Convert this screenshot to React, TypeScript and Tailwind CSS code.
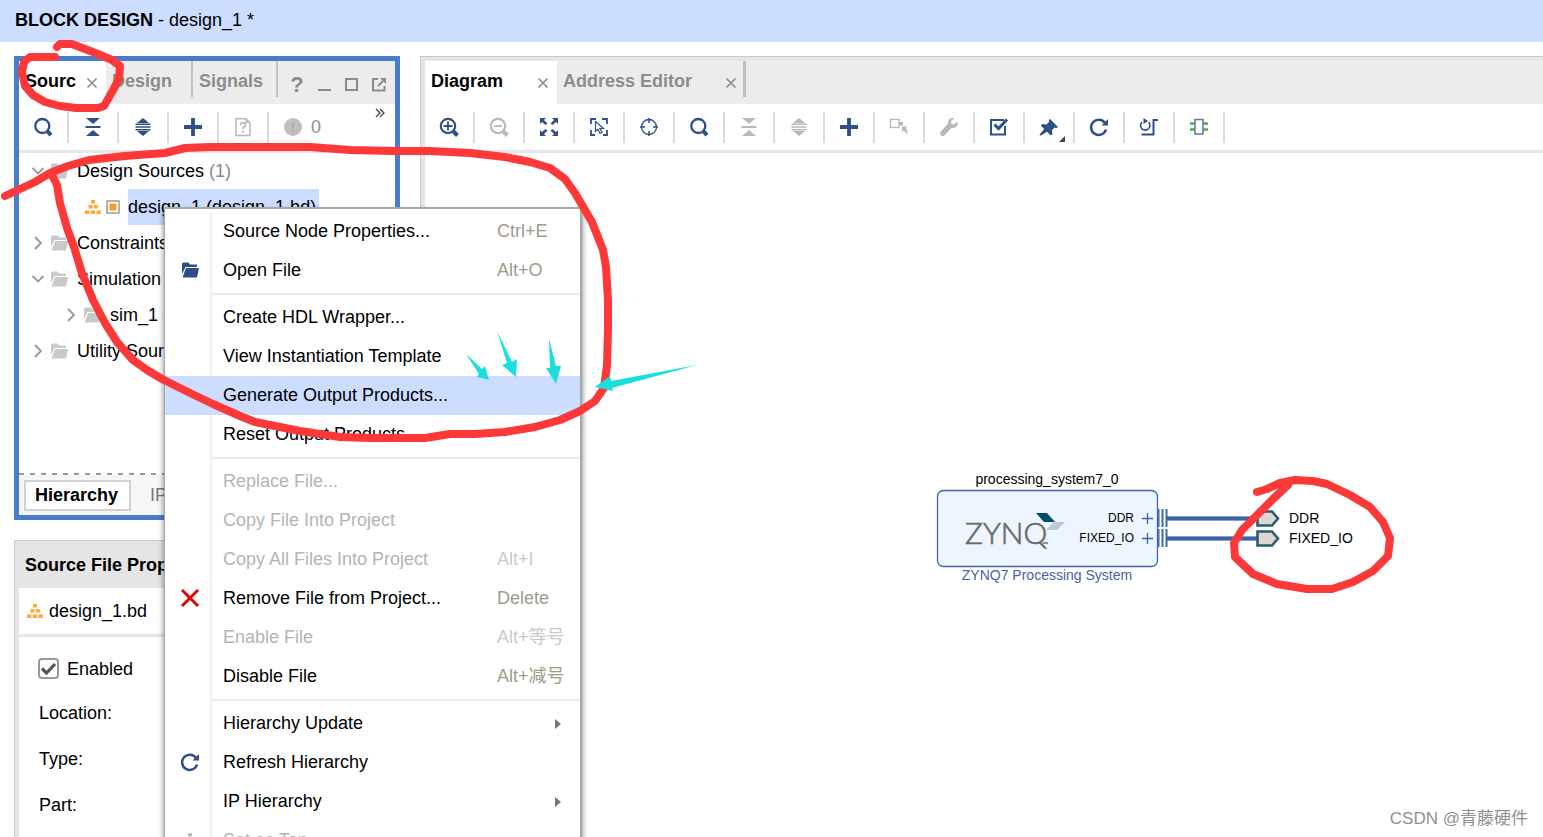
import { useState, type ReactNode } from "react";

const NAVY = "#2f4f87";
const MUTED = "#b9b9b9";

type IconProps = { color?: string };

const Svg = ({ children }: { children: ReactNode }) => (
  <svg width="20" height="20" viewBox="0 0 20 20" fill="none" aria-hidden="true">
    {children}
  </svg>
);

const SearchIcon = ({ color = NAVY }: IconProps) => (
  <Svg>
    <circle cx="9.3" cy="9" r="7" stroke={color} strokeWidth="2.3" />
    <path d="M14.5 14.5l3.5 3.5" stroke={color} strokeWidth="4" />
  </Svg>
);

const ZoomInIcon = () => (
  <Svg>
    <circle cx="9" cy="9" r="7.2" stroke={NAVY} strokeWidth="2.2" />
    <path d="M14.5 14.5l4 4" stroke={NAVY} strokeWidth="4" />
    <path d="M9 4.5v9M4.5 9h9" stroke={NAVY} strokeWidth="1.8" />
  </Svg>
);

const ZoomOutIcon = () => (
  <Svg>
    <circle cx="9" cy="9" r="7.2" stroke={MUTED} strokeWidth="2.2" />
    <path d="M14.5 14.5l4 4" stroke={MUTED} strokeWidth="4" />
    <path d="M5 9h8" stroke={MUTED} strokeWidth="1.8" />
  </Svg>
);

const CollapseIcon = ({ color = NAVY }: IconProps) => (
  <Svg>
    <path d="M3 1h14l-7 6zM2.5 9h15v2h-15zM3 19h14l-7-6z" fill={color} />
  </Svg>
);

const ExpandIcon = ({ color = NAVY }: IconProps) => (
  <Svg>
    <path d="M10 1l6 5H4zM2.5 6.5h15V8h-15zM2.5 9.2h15v1.6h-15zM2.5 12h15v1.5h-15zM4 14h12l-6 5z" fill={color} />
  </Svg>
);

const PlusIcon = () => (
  <Svg>
    <path d="M10 1v18M1 10h18" stroke={NAVY} strokeWidth="3.8" />
  </Svg>
);

const HelpDocIcon = () => (
  <Svg>
    <path d="M3 1.8h10l4 4v12.700H3z" stroke={MUTED} strokeWidth="1.5" />
    <path d="M12.500 1.500v4.500H17z" fill={MUTED} />
    <path d="M7.500 8c0-3 5-3 5 0 0 2-2.500 2-2.500 4M10 13.500v2" stroke={MUTED} strokeWidth="1.8" />
  </Svg>
);

const WarnIcon = () => (
  <Svg>
    <circle cx="10" cy="10" r="9" fill="#bfbfbf" />
    <path d="M10 5v6.5M10 13v2" stroke="#adadad" strokeWidth="2" />
  </Svg>
);

const FitIcon = () => (
  <Svg>
    <path
      d="M1 1h6l-2 2 3.500 3.500L6.500 8 3 5 1 7zM19 1h-6l2 2-3.500 3.500L13.500 8 17 5l2 2zM1 19h6l-2-2 3.500-3.500L6.500 12 3 15l-2-2zM19 19h-6l2-2-3.500-3.500 2-1.500 3.500 3 2-2z"
      fill={NAVY}
    />
  </Svg>
);

const SelectAreaIcon = () => (
  <Svg>
    <path d="M2 7V2h5M13 2h5v5M18 13v5h-4M6 18H2v-5" stroke={NAVY} strokeWidth="1.8" />
    <path d="M6.500 4.500v10l2.500-2.200 2 4.200 2-1-2-4h3.500z" stroke={NAVY} strokeWidth="1.2" fill="#fff" />
  </Svg>
);

const TargetIcon = () => (
  <Svg>
    <circle cx="10" cy="10" r="7.5" stroke={NAVY} strokeWidth="1.3" />
    <path d="M10 1v5M10 14v5M1 10h5M14 10h5" stroke={NAVY} strokeWidth="1.5" />
  </Svg>
);

const MakeExternalIcon = () => (
  <Svg>
    <rect x="1.5" y="2.5" width="8.500" height="8" stroke={MUTED} strokeWidth="1.3" />
    <path d="M10 5h4v3.500h-4zM13 9.500h5.500L17 11l2 5.500h-1.500L15 13.500 13 15z" fill={MUTED} />
  </Svg>
);

const WrenchIcon = () => (
  <Svg>
    <path
      d="M18.600 4.600l-3.300 3-2.700-.6-.6-2.700 3.200-3C12.500.2 8.800 2 9 6.500L1.500 15c-1.500 2.500 1.300 5.300 3.800 3.500L12.500 11c4.500.5 7.200-3 6.100-6.400z"
      fill={MUTED}
    />
  </Svg>
);

const ValidateIcon = () => (
  <Svg>
    <path d="M15 3H2v14.500h14V9" stroke={NAVY} strokeWidth="2" />
    <path d="M5.500 7.500l4 4L18 2.500" stroke={NAVY} strokeWidth="3" />
  </Svg>
);

const PinIcon = () => (
  <Svg>
    <path
      d="M11 2l8 8-1.500 1.200-2-.6-2.500 2.700.4 4-1.600 1.200-3.800-3.700L2 18.500H.8v-1.200L5.200 12 1.800 8.500 3.300 7l4.200.4 2.700-2.600L9.700 3z"
      fill={NAVY}
    />
  </Svg>
);

const RefreshIcon = () => (
  <Svg>
    <path d="M16 6A7.600 7.600 0 1 0 17 12.500" stroke={NAVY} strokeWidth="2.500" />
    <path d="M19 2v6.500h-6.500z" fill={NAVY} />
  </Svg>
);

const RegenerateIcon = () => (
  <Svg>
    <path d="M3 5a4.700 4.700 0 1 0 6.500 0" stroke={NAVY} strokeWidth="1.600" />
    <path d="M4.500 1v6l4.500-3z" fill={NAVY} />
    <path d="M19 3h-4.500v14.500H2.500" stroke={NAVY} strokeWidth="2" />
  </Svg>
);

const ChipIcon = () => (
  <Svg>
    <path d="M1 6.500h18M1 12.500h18" stroke="#4cae50" strokeWidth="2.500" />
    <rect x="6" y="2.500" width="8" height="14.500" stroke="#6076a6" strokeWidth="1.500" fill="#fff" />
  </Svg>
);

const FolderIcon = ({ color = "#c9c9c9" }: IconProps) => (
  <Svg>
    <path d="M2 4C2 3 3 2.500 4 2.500h4.500l1.500 2h7V7H5.500L2 14z" fill={color} />
    <path d="M6 8h13l-2 9.500H2.500z" fill={color} />
  </Svg>
);

const RemoveIcon = () => (
  <Svg>
    <path d="M2 2l16 16M18 2L2 18" stroke="#e60000" strokeWidth="3" />
  </Svg>
);

const HierarchyIcon = ({ color = "#fca83a" }: IconProps) => (
  <svg width="18" height="16" viewBox="0 0 18 16" fill={color} aria-hidden="true">
    <path d="M7 1h4v3.500H7zM4.500 6h4v3.500h-4zM9.800 6h4v3.500h-4zM1 11.500h4.500V15H1zM6.700 11.500h4.500V15H6.700zM12.400 11.500h4.500V15h-4.500z" />
  </svg>
);

const Chevron = ({ open }: { open?: boolean }) => (
  <svg width="12" height="14" viewBox="0 0 12 14" fill="none" stroke="#989898" strokeWidth="1.800" aria-hidden="true">
    <path d={open ? "M.5 4L6 9.500 11.500 4" : "M3 1l6 6-6 6"} />
  </svg>
);

const CloseIcon = () => (
  <svg width="12" height="12" viewBox="0 0 12 12" stroke="#8e8e8e" strokeWidth="1.700" aria-hidden="true">
    <path d="M1.500 1.500l9 9M10.500 1.500l-9 9" />
  </svg>
);

function ToolButton({ label, disabled, children }: { label: string; disabled?: boolean; children: ReactNode }) {
  return (
    <>
      <button aria-label={label} disabled={disabled} className="relative flex h-full w-12 shrink-0 items-center justify-center">
        {children}
      </button>
      <span className="h-[31px] w-0.5 shrink-0 bg-[#dbdbdb]" />
    </>
  );
}

function TreeRow({ indent, open, label, count }: { indent: string; open?: boolean; label: string; count?: string }) {
  return (
    <li className={`flex h-9 items-center whitespace-nowrap ${indent}`}>
      <Chevron open={open} />
      <span className="ml-[5px] mr-2">
        <FolderIcon />
      </span>
      {label}
      {count && <span className="ml-[5px] text-[#8a8a8a]">{count}</span>}
    </li>
  );
}

function SourcesPanel() {
  return (
    <section className="flex h-[464px] flex-col border-[5px] border-[#4a7ccc] bg-white">
      <div className="flex h-[43px] shrink-0 bg-[#ececec] font-bold text-[#8c8c8c]">
        <button className="flex w-[87px] items-center bg-white pb-1 pl-1.5 text-black">
          Sourc
          <span className="ml-2.5 mt-1">
            <CloseIcon />
          </span>
        </button>
        <button className="h-9 w-[87px] border-r-2 border-[#c4c4c4] pl-1.5 pt-1 text-left">Design</button>
        <button className="h-9 w-[85px] border-r-2 border-[#c4c4c4] pl-1.5 pt-1 text-left">Signals</button>
        <div className="flex flex-1 items-center gap-[13px] pl-[11px] pt-1">
          <button aria-label="Help" className="w-4 text-[22px]">?</button>
          <button aria-label="Minimize">
            <svg width="14" height="14" stroke="#8c8c8c" strokeWidth="2" aria-hidden="true">
              <path d="M0 12h13" />
            </svg>
          </button>
          <button aria-label="Maximize">
            <svg width="14" height="14" fill="none" stroke="#8c8c8c" strokeWidth="2" aria-hidden="true">
              <rect x="1" y="1" width="11" height="11" />
            </svg>
          </button>
          <button aria-label="Float">
            <svg width="14" height="14" fill="none" stroke="#8c8c8c" strokeWidth="2" aria-hidden="true">
              <path d="M6 1H1v11.500h11.500V8M6 8l5-5" />
              <path d="M8 0h6v6z" fill="#8c8c8c" stroke="none" />
            </svg>
          </button>
        </div>
      </div>

      <div className="flex h-[49px] shrink-0 items-center border-b-[3px] border-[#e5e5e5]">
        <ToolButton label="Search"><SearchIcon /></ToolButton>
        <ToolButton label="Collapse all"><CollapseIcon /></ToolButton>
        <ToolButton label="Expand all"><ExpandIcon /></ToolButton>
        <ToolButton label="Add sources"><PlusIcon /></ToolButton>
        <ToolButton label="Missing sources" disabled><HelpDocIcon /></ToolButton>
        <button className="ml-3.5 flex items-center gap-2 text-[#8f8f8f]">
          <WarnIcon />0
        </button>
        <button aria-label="More" className="ml-auto mr-2.5 self-start pt-1">
          <svg width="10" height="10" fill="none" stroke="#444" strokeWidth="1.300" aria-hidden="true">
            <path d="M1 1l4 4-4 4M5 1l4 4-4 4" />
          </svg>
        </button>
      </div>

      <ul className="flex-1 pl-[13px]">
        <TreeRow indent="pl-0" open label="Design Sources" count="(1)" />
        <li className="flex h-9 items-center pl-[52px]">
          <HierarchyIcon />
          <svg width="14" height="14" className="ml-1 mr-2" aria-hidden="true">
            <rect x="1" y="1" width="12" height="12" fill="#fff" stroke="#8a8a8a" strokeWidth="1.300" />
            <rect x="3.500" y="3.500" width="7" height="7" fill="#fc9a2e" />
          </svg>
          <span className="flex h-9 items-center whitespace-nowrap bg-[#ccddff] pr-[3px]">design_1 (design_1.bd)</span>
        </li>
        <TreeRow indent="pl-0" label="Constraints" />
        <TreeRow indent="pl-0" open label="Simulation" />
        <TreeRow indent="pl-[33px]" label="sim_1" count="(1)" />
        <TreeRow indent="pl-0" label="Utility Sources" />
      </ul>

      <div className="h-0.5 shrink-0 bg-[repeating-linear-gradient(90deg,#999_0_5px,#fff_5px_11px)]" />
      <div className="flex h-10 shrink-0 items-center bg-[#f6f6f6] pl-[5px]">
        <button className="flex h-[31px] w-[107px] items-center justify-center border-2 border-[#d2d2d2] bg-white pr-0.5 font-bold">
          Hierarchy
        </button>
        <button className="ml-[19px] text-[#777]">IP Sources</button>
      </div>
    </section>
  );
}

function PropertiesPanel() {
  const [enabled, setEnabled] = useState(true);

  return (
    <section className="min-h-0 flex-1 overflow-hidden border-l border-t border-[#c8c8c8]">
      <div className="h-full border-l-4 border-[#e5e5e5]">
        <h2 className="flex h-[47px] items-center bg-[#e5e5e5] pl-1.5 font-bold">Source File Properties</h2>
        <div className="flex h-[49px] items-center gap-[5px] border-b-[3px] border-[#e5e5e5] pl-[7px]">
          <HierarchyIcon />
          <span>design_1.bd</span>
        </div>
        <label className="mt-2.5 flex h-[43px] items-center gap-2 pl-[19px]">
          <span className="relative flex h-[21px] w-[21px]">
            <input
              type="checkbox"
              checked={enabled}
              onChange={(e) => setEnabled(e.target.checked)}
              className="h-full w-full appearance-none rounded-[4px] border-2 border-[#999] bg-white"
            />
            {enabled && (
              <svg className="pointer-events-none absolute inset-0" width="21" height="21" fill="none" aria-hidden="true">
                <path d="M4 10.500l4.500 4.500 8.500-9" stroke="#555" strokeWidth="3.200" />
              </svg>
            )}
          </span>
          Enabled
        </label>
        <dl className="pl-5">
          <dt className="flex h-[46px] items-center">Location:</dt>
          <dt className="flex h-[46px] items-center">Type:</dt>
          <dt className="flex h-[46px] items-center">Part:</dt>
        </dl>
      </div>
    </section>
  );
}

function BlockDiagram() {
  return (
    <svg
      width="440"
      height="120"
      className="absolute left-[505px] top-[315px]"
      fontFamily='"Liberation Sans", Arial, sans-serif'
      role="img"
      aria-label="processing_system7_0"
    >
      <text x="117" y="16" fontSize="14" textAnchor="middle">processing_system7_0</text>
      <rect x="7.500" y="22.500" width="220" height="76" rx="6" fill="#edf5ff" stroke="#4564a5" strokeWidth="1.300" />
      <text x="35" y="76" fontSize="30" fontFamily="Lato, sans-serif" fontWeight="300" fill="#6b6b6b" stroke="#6b6b6b" strokeWidth="0.7">
        ZYNQ
      </text>
      <path d="M106 45h11l8 9h-11z" fill="#004a6e" />
      <path d="M124 54h11l-8 8h-11z" fill="#b9c9d8" />
      <path d="M113 75h5" stroke="#6b6b6b" strokeWidth="1.500" />
      <g fontSize="12" textAnchor="end">
        <text x="204" y="54">DDR</text>
        <text x="204" y="74">FIXED_IO</text>
      </g>
      <g stroke="#3d62a6" strokeWidth="1.300">
        <path d="M212 50.500h11M217.500 45v11M212 70.500h11M217.500 65v11" />
      </g>
      <path d="M237 50.500h90M237 70.500h90" stroke="#8a9fcb" strokeWidth="5" />
      <path d="M237 50.500h90M237 70.500h90" stroke="#3d62a6" strokeWidth="3" />
      <path
        d="M228.500 41v18M232.500 41v18M236.500 41v18M228.500 61v18M232.500 61v18M236.500 61v18"
        stroke="#3d6ca6"
        strokeWidth="2"
      />
      <path d="M327.500 43.500h14.500l6 7-6 7h-14.500zM327.500 63.500h14.500l6 7-6 7h-14.500z" fill="#ddd6d2" stroke="#265f6c" strokeWidth="2.600" />
      <g fontSize="14">
        <text x="359" y="55">DDR</text>
        <text x="359" y="75">FIXED_IO</text>
      </g>
      <text x="117" y="112" fontSize="14" textAnchor="middle" fill="#4564a5">ZYNQ7 Processing System</text>
    </svg>
  );
}

function DiagramPanel() {
  return (
    <section className="flex min-w-0 flex-1 border-l border-t border-[#c8c8c8]">
      <div className="flex min-w-0 flex-1 flex-col border-l-4 border-t-4 border-[#e5e5e5]">
        <div className="flex h-[43px] shrink-0 bg-[#ececec] font-bold text-[#8c8c8c]">
          <button className="flex w-[132px] items-center justify-between bg-white pb-1 pl-1.5 pr-2 text-black">
            Diagram
            <span className="mt-1"><CloseIcon /></span>
          </button>
          <button className="flex h-9 w-[189px] items-center justify-between border-r-[3px] border-[#c0c0c0] pl-1.5 pr-1.5 pt-1">
            Address Editor
            <span className="mt-1"><CloseIcon /></span>
          </button>
        </div>
        <div className="flex h-[49px] shrink-0 items-center border-b-[3px] border-[#e5e5e5]">
          <ToolButton label="Zoom in"><ZoomInIcon /></ToolButton>
          <ToolButton label="Zoom out" disabled><ZoomOutIcon /></ToolButton>
          <ToolButton label="Zoom fit"><FitIcon /></ToolButton>
          <ToolButton label="Select area"><SelectAreaIcon /></ToolButton>
          <ToolButton label="Autofit selection"><TargetIcon /></ToolButton>
          <ToolButton label="Search"><SearchIcon /></ToolButton>
          <ToolButton label="Collapse all" disabled><CollapseIcon color={MUTED} /></ToolButton>
          <ToolButton label="Expand all" disabled><ExpandIcon color={MUTED} /></ToolButton>
          <ToolButton label="Add IP"><PlusIcon /></ToolButton>
          <ToolButton label="Make external" disabled><MakeExternalIcon /></ToolButton>
          <ToolButton label="Customize block" disabled><WrenchIcon /></ToolButton>
          <ToolButton label="Validate design"><ValidateIcon /></ToolButton>
          <ToolButton label="Pin block">
            <PinIcon />
            <svg className="absolute bottom-2 right-2" width="6" height="6" aria-hidden="true">
              <path d="M6 0v6H0z" fill="#444" />
            </svg>
          </ToolButton>
          <ToolButton label="Regenerate layout"><RefreshIcon /></ToolButton>
          <ToolButton label="Optimize routing"><RegenerateIcon /></ToolButton>
          <ToolButton label="Default view"><ChipIcon /></ToolButton>
        </div>
        <div className="relative flex-1 overflow-hidden bg-white">
          <BlockDiagram />
        </div>
      </div>
    </section>
  );
}

type MenuItem = {
  label: string;
  keys?: string;
  disabled?: boolean;
  active?: boolean;
  submenu?: boolean;
  icon?: ReactNode;
};

const menuGroups: MenuItem[][] = [
  [
    { label: "Source Node Properties...", keys: "Ctrl+E" },
    { label: "Open File", keys: "Alt+O", icon: <FolderIcon color={NAVY} /> },
  ],
  [
    { label: "Create HDL Wrapper..." },
    { label: "View Instantiation Template" },
    { label: "Generate Output Products...", active: true },
    { label: "Reset Output Products..." },
  ],
  [
    { label: "Replace File...", disabled: true },
    { label: "Copy File Into Project", disabled: true },
    { label: "Copy All Files Into Project", keys: "Alt+I", disabled: true },
    { label: "Remove File from Project...", keys: "Delete", icon: <RemoveIcon /> },
    { label: "Enable File", keys: "Alt+等号", disabled: true },
    { label: "Disable File", keys: "Alt+减号" },
  ],
  [
    { label: "Hierarchy Update", submenu: true },
    { label: "Refresh Hierarchy", icon: <RefreshIcon /> },
    { label: "IP Hierarchy", submenu: true },
    { label: "Set as Top", disabled: true, icon: <HierarchyIcon color="#bdbdbd" /> },
  ],
];

function ContextMenu() {
  return (
    <div
      role="menu"
      className="absolute left-[164px] top-[207px] w-[418px] border-l border-r-2 border-t-2 border-[#a8a8a8] bg-white pt-[3px] shadow-[0_4px_5px_1px_rgba(0,0,0,0.4)]"
    >
      {menuGroups.map((group, i) => (
        <div key={i}>
          {i > 0 && (
            <div className="flex h-2 items-center">
              <span className="h-2 w-[47px] shrink-0 border-r-2 border-[#f0f0f0]" />
              <span className="h-0.5 flex-1 bg-[#eaeaea]" />
            </div>
          )}
          {group.map((item) => (
            <button
              key={item.label}
              role="menuitem"
              disabled={item.disabled}
              className={`flex h-[39px] w-full items-center whitespace-nowrap text-left ${item.active ? "bg-[#ccddff]" : ""} ${
                item.disabled ? "text-[#b4b4b4]" : "text-black"
              }`}
            >
              <span
                className={`flex h-full w-[47px] shrink-0 items-center justify-center border-r-2 pb-0.5 pl-1 ${
                  item.active ? "border-transparent" : "border-[#f0f0f0]"
                }`}
              >
                {item.icon}
              </span>
              <span className="w-[285px] shrink-0 pb-0.5 pl-[11px]">{item.label}</span>
              {item.keys && (
                <span className={`pb-0.5 ${item.disabled ? "text-[#cacaca]" : "text-[#9c9c8c]"}`}>{item.keys}</span>
              )}
              {item.submenu && (
                <svg width="6" height="10" className="ml-auto mr-[19px]" aria-hidden="true">
                  <path d="M0 0l6 5-6 5z" fill="#757575" />
                </svg>
              )}
            </button>
          ))}
        </div>
      ))}
    </div>
  );
}

// hand-drawn marks laid over the whole workspace
function Annotations() {
  return (
    <svg className="pointer-events-none absolute left-0 top-0" width="1543" height="837" fill="none" aria-hidden="true">
      <g stroke="#fc3838" strokeWidth="8" strokeLinecap="round" strokeLinejoin="round">
        <path d="M57 47L60 44 72 44 85 49 98 54 112 60 120 66 119 79 112 92 104 106 98 108 76 108 60 106 45 102 33 95 25 86 22 72 24 62 30 57 55 57" />
        <path d="M5 196L35 182 50 173 68 166 89 160 125 156 165 153 185 148 210 147 310 147 350 150 395 151 430 151 470 153 505 157 530 162 550 168 565 179 575 193 592 222 603 250 606 267 608 300 608 330 607 365 604 388 595 401 580 411 560 420 535 427 505 432 475 434 450 434 425 438 370 438 340 437 300 431 255 422 240 416 213 404 190 393 162 379 147 370 133 360 117 342 105 323 93 300 82 273 74 247 67 228 60 203 57 185 52 175" />
        <path d="M1257 492L1267 489 1280 483 1295 480 1313 481 1327 484 1350 495 1370 507 1383 522 1390 538 1388 556 1373 571 1353 582 1332 589 1307 589 1277 584 1253 574 1235 557 1234 543 1242 530 1260 512 1273 499 1288 485" />
      </g>
      <g fill="#1adede">
        <path d="M466 354L482 369 485 366 489 380 477 377 479 374z" />
        <path d="M497 331L512 362 517 359 516 377 502 365 507 363z" />
        <path d="M549 339L556 366 561 366 556 384 546 368 550 368z" />
        <path d="M697 365L612 388 613 391 595 387 610 376 611 381z" />
      </g>
    </svg>
  );
}

export default function App() {
  return (
    <div className='relative flex h-screen flex-col overflow-hidden bg-white font-["Liberation_Sans",Arial,"Noto_Sans_CJK_SC",sans-serif] text-lg leading-6 text-black'>
      <header className="flex h-[42px] shrink-0 items-center bg-[#ccddff] px-[15px] pb-0.5">
        <h1>
          <b>BLOCK DESIGN</b> - design_1 *
        </h1>
      </header>
      <main className="flex min-h-0 flex-1 gap-5 pl-3.5 pt-3.5">
        <div className="flex w-[386px] shrink-0 flex-col gap-5">
          <SourcesPanel />
          <PropertiesPanel />
        </div>
        <DiagramPanel />
      </main>
      <ContextMenu />
      <Annotations />
      <p className="absolute bottom-1.5 right-[15px] text-[17px] text-[#8f8f8f]">CSDN @青藤硬件</p>
    </div>
  );
}
